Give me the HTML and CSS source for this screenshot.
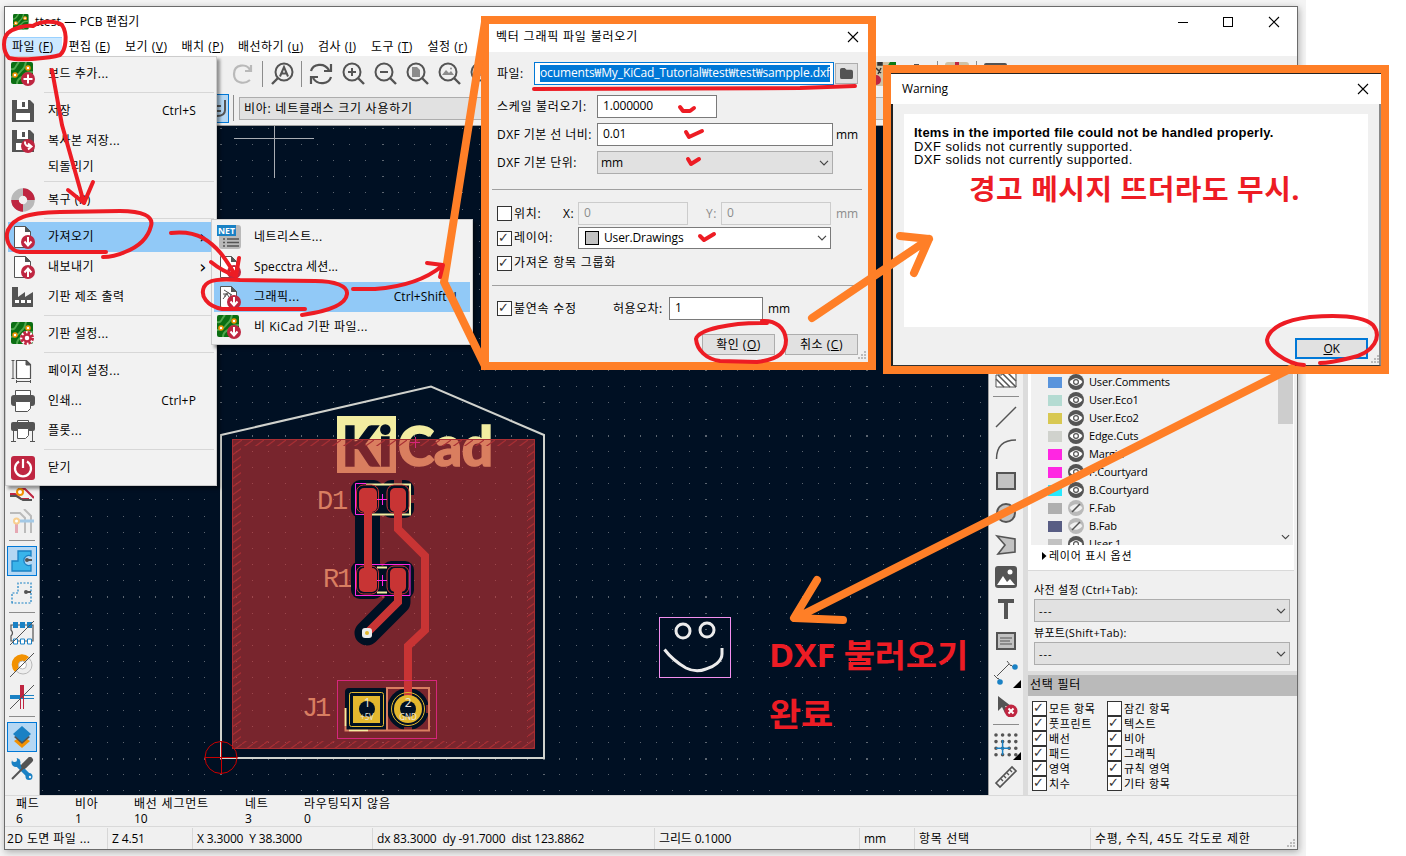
FILE: index.html
```html
<!DOCTYPE html>
<html lang="ko">
<head>
  <meta charset="UTF-8">
  <meta name="viewport" content="width=device-width, initial-scale=1.0">
  <title>test — PCB 편집기</title>
  <link rel="stylesheet" href="styles.css">
</head>
<body>
  <svg class="defs" width="0" height="0">
    <symbol id="pcb" viewBox="0 0 24 24">
      <rect width="22" height="22" rx="2" fill="#0b6e12"/>
      <path d="M0 7c5 1 4-3 8-7M0 15c8 0 8-5 12-8 2-2 2-4 3-7M6 22c0-6 5-6 7-9s5-3 9-3M14 22c1-4 4-5 8-6" stroke="#4fa64d" stroke-width="2" fill="none"/>
      <circle cx="4" cy="13" r="2" fill="#fff" stroke="#f29100" stroke-width="1.5"/>
      <circle cx="17" cy="6" r="2" fill="#fff" stroke="#f29100" stroke-width="1.5"/>
    </symbol>
    <symbol id="floppy" viewBox="0 0 24 24">
      <path d="M1 1h18l4 4v18H1z" fill="#545454"/><path d="M6 1h11v9H6z" fill="#fff"/><path d="M11 3h3v5h-3z" fill="#545454"/><path d="M5 14h14v7H5z" fill="#fff"/>
    </symbol>
    <symbol id="sheet" viewBox="0 0 24 24">
      <path d="M3.500 1.500h11l5 5v16h-16z" fill="#fff" stroke="#545454"/><path d="M14 1v6h6z" fill="#545454"/>
    </symbol>
    <symbol id="b-down" viewBox="0 0 24 24"><circle cx="17" cy="17" r="7" fill="#bf2641"/><path d="M17 12v8m-3.500-3.500l3.500 4 3.500-4" stroke="#fff" stroke-width="2" fill="none"/></symbol>
    <symbol id="b-up" viewBox="0 0 24 24"><circle cx="17" cy="17" r="7" fill="#bf2641"/><path d="M17 22v-8m-3.500 3.500l3.500-4 3.500 4" stroke="#fff" stroke-width="2" fill="none"/></symbol>
    <symbol id="b-plus" viewBox="0 0 24 24"><circle cx="17" cy="17" r="7" fill="#bf2641"/><path d="M17 12.500v9M12.500 17h9" stroke="#fff" stroke-width="2"/></symbol>
    <symbol id="b-arrow" viewBox="0 0 24 24"><circle cx="17" cy="17" r="7" fill="#bf2641"/><path d="M14 12.500c-.5 4 2 5 6 5m-3-3l3.500 3-3.500 3" stroke="#fff" stroke-width="2" fill="none"/></symbol>
    <symbol id="b-gear" viewBox="0 0 24 24"><circle cx="16" cy="16" r="7" fill="#fff"/><circle cx="16" cy="16" r="5.500" fill="none" stroke="#bf2641" stroke-width="3" stroke-dasharray="2.600 1.720"/><circle cx="16" cy="16" r="3.500" fill="#fff" stroke="#bf2641" stroke-width="2.500"/></symbol>
    <symbol id="lens" viewBox="0 0 24 24"><circle cx="11" cy="10" r="8.500" fill="none" stroke="#545454" stroke-width="2"/><path d="M17 16l6 6" stroke="#545454" stroke-width="2.400"/></symbol>
    <symbol id="eye" viewBox="0 0 16 16"><circle cx="8" cy="8" r="8" fill="#545454"/><path d="M1.500 8q6.500-7.500 13 0-6.500 7.500-13 0z" fill="#fff"/><circle cx="8" cy="8" r="2.400" fill="#fff" stroke="#545454" stroke-width="1.200"/></symbol>
    <symbol id="eye-off" viewBox="0 0 16 16"><circle cx="8" cy="8" r="8" fill="#b9b9b9"/><path d="M1.500 8q6.500-7.500 13 0-6.500 7.500-13 0z" fill="#f0f0f0"/><path d="M4 12l8-8" stroke="#545454" stroke-width="1.500"/></symbol>
    <symbol id="close" viewBox="0 0 12 12"><path d="M1 1l10 10M11 1L1 11" stroke="#000" stroke-width="1.100"/></symbol>
    <symbol id="chev" viewBox="0 0 10 6"><path d="M1 .8l4 4 4-4" fill="none" stroke="#444" stroke-width="1.200"/></symbol>
    <symbol id="grip" viewBox="0 0 9 9"><path d="M7 1h2M4 4h2M7 4h2M1 7h2M4 7h2M7 7h2" stroke="#bbb" stroke-width="2"/></symbol>
  </svg>

  <div class="desktop">
    <div class="window">
      <div class="titlebar">
        <svg class="app-icon"><use href="#pcb"/></svg>
        <span class="title">ttest — PCB 편집기</span>
        <svg class="win-buttons" viewBox="0 0 104 12"><path d="M1 6.500h10" stroke="#000"/><rect x="46.500" y="1.500" width="9" height="9" fill="none" stroke="#000"/><path d="M92 1l10 10M102 1L92 11" stroke="#000" stroke-width="1.100"/></svg>
      </div>
      <div class="menubar">
        <span class="active">파일 (<u>F</u>)</span>
        <span>편집 (<u>E</u>)</span>
        <span>보기 (<u>V</u>)</span>
        <span>배치 (<u>P</u>)</span>
        <span class="wide">배선하기 (<u>u</u>)</span>
        <span class="narrow">검사 (<u>I</u>)</span>
        <span>도구 (<u>T</u>)</span>
        <span>설정 (<u>r</u>)</span>
      </div>
      <div class="toolbar">
        <svg class="tool" viewBox="0 0 24 24"><path d="M20 3v6h-6M19 8C16 1 3 2 3 12c0 9 10 11 16 6" fill="none" stroke="#b9b9b9" stroke-width="2.200"/></svg>
        <i class="vsep"></i>
        <svg class="tool" viewBox="0 0 24 24"><circle cx="14" cy="10" r="8.500" fill="none" stroke="#545454" stroke-width="2"/><path d="M8 16l-6 6" stroke="#545454" stroke-width="2.400"/><path d="M10 14.500L14 5l4 9.500M11.500 11.500h5" fill="none" stroke="#545454" stroke-width="2"/></svg>
        <i class="vsep"></i>
        <svg class="tool" viewBox="0 0 24 24"><path d="M2 9C4 2 15 0 20 8M22 2v7h-7M22 15c-2 7-13 9-18 1M2 22v-7h7" fill="none" stroke="#545454" stroke-width="2.200"/></svg>
        <svg class="tool" viewBox="0 0 24 24"><use href="#lens"/><path d="M7 10h8M11 6v8" stroke="#545454" stroke-width="2"/></svg>
        <svg class="tool" viewBox="0 0 24 24"><use href="#lens"/><path d="M7 10h8" stroke="#545454" stroke-width="2"/></svg>
        <svg class="tool" viewBox="0 0 24 24"><use href="#lens"/><path d="M7 5h5l3 3v7H7z" fill="#8c8c8c"/></svg>
        <svg class="tool" viewBox="0 0 24 24"><use href="#lens"/><path d="M5 13l4-5 3 3 2-2 3 4z" fill="#8c8c8c"/><circle cx="14" cy="6.500" r="1" fill="#8c8c8c"/></svg>
        <svg class="tool" viewBox="0 0 24 24"><use href="#lens"/><path d="M7 6h8v8H7z" fill="#8c8c8c"/></svg>
        <span class="spring"></span>
        <svg class="tool board" viewBox="0 0 24 24"><rect width="24" height="24" rx="2" fill="#cfc2a6"/><path d="M12 24V10l6-10h6v24z" fill="#0b7a14"/><path d="M6 0h4v3H6zM4 6l5 5M9 6l-3 6" stroke="#333" fill="#333" stroke-width="1.500"/><circle cx="4" cy="18" r="5" fill="#bf2641"/></svg>
        <svg class="tool" viewBox="0 0 24 24"><path d="M8 2h5v2H8z" fill="#545454"/></svg>
        <i class="vsep"></i>
        <svg class="tool" viewBox="0 0 24 24"><rect width="24" height="24" rx="3" fill="#cfc2a6"/><path d="M10 0h4v8h-4z" fill="#bf2641"/></svg>
        <i class="vsep"></i>
        <svg class="tool" viewBox="0 0 24 24"><rect y="1" width="23" height="18" rx="2" fill="#545454"/></svg>
      </div>
      <div class="toolbar second">
        <span class="toggle"><svg viewBox="0 0 12 24"><path d="M1 10h4M1 15h4M9 4v10q0 6-8 6" fill="none" stroke="#545454" stroke-width="2"/></svg></span>
        <i class="vsep"></i>
        <span class="via-select">비아: 네트클래스 크기 사용하기</span>
      </div>

      <div class="workspace">
        <div class="side left">
          <svg viewBox="0 0 24 24"><path d="M0 17h5l6 5h8M8 12h7l9 9" fill="none" stroke="#bf2641" stroke-width="2"/><path d="M0 19l6 0 7 4h9" fill="none" stroke="#545454" stroke-width="2"/><circle cx="10" cy="15" r="3" fill="#fff" stroke="#f29100" stroke-width="2"/></svg>
          <svg viewBox="0 0 24 24"><path d="M0 4h10l5 5v15M14 0l7 7v17" fill="none" stroke="#bbb" stroke-width="2"/><path d="M6.500 12v12" stroke="#e6a8b3" stroke-width="3"/><path d="M8 12h16" stroke="#a3c9e6" stroke-width="3"/><circle cx="6.500" cy="12" r="2.500" fill="#fff" stroke="#f9cf8f" stroke-width="2"/></svg>
          <i></i>
          <svg class="on" viewBox="0 0 24 24"><path d="M2 22V12h6V2h13v5a5 5 0 1 0 0 9v6z" fill="#39b4ea" stroke="#1a81c4" stroke-width="1.300"/><circle cx="17" cy="11" r="2" fill="#545454"/><path d="M17 11h5" stroke="#545454" stroke-width="2"/></svg>
          <svg viewBox="0 0 24 24"><path d="M2 22V12h6V2h13v20z" fill="none" stroke="#1a81c4" stroke-width="1.200" stroke-dasharray="2 1.500"/><circle cx="16" cy="11" r="2" fill="#545454"/><path d="M16 11h5" stroke="#545454" stroke-width="2"/></svg>
          <i></i>
          <svg viewBox="0 0 24 24"><path d="M1 4h22v16H1v-5q3-3 0-6z" fill="none" stroke="#545454" stroke-width="1.200"/><path d="M3 1h5v6H3zM10 1h5v6h-5zM17 1h5v6h-5z" fill="#1a81c4"/><path d="M3.500 18h4v5h-4zM10.500 18h4v5h-4zM17.500 18h4v5h-4z" fill="#fff" stroke="#1a81c4"/><path d="M0 24L24 0" stroke="#545454"/></svg>
          <svg viewBox="0 0 24 24"><circle cx="13" cy="12" r="9" fill="#eee" stroke="#b9b9b9"/><path d="M5 19A10 10 0 0 1 19 4l-5 5a4 4 0 0 0-5 5z" fill="#f29100"/><circle cx="12.500" cy="12" r="4" fill="#fff" stroke="#b9b9b9"/><path d="M0 24L24 0" stroke="#545454"/></svg>
          <svg viewBox="0 0 24 24"><path d="M0 12h12" stroke="#1a81c4" stroke-width="4"/><path d="M12 10.500h12M12 13.500h12" stroke="#1a81c4"/><path d="M12 0v13" stroke="#bf2641" stroke-width="4"/><path d="M10.500 13v11M13.500 13v11" stroke="#bf2641"/><path d="M0 24L24 0" stroke="#545454"/></svg>
          <i></i>
          <svg class="on" viewBox="0 0 24 24"><path d="M12 23l-8-7 8-5 8 5z" fill="#f29100"/><path d="M12 19l-8-7 8-5 8 5z" fill="#545454"/><path d="M12 17L3 9l9-8 9 8z" fill="#1a81c4"/></svg>
          <svg viewBox="0 0 24 24"><path d="M5 5l14 14" stroke="#1a81c4" stroke-width="4.500"/><circle cx="6" cy="5.500" r="4.500" fill="#1a81c4"/><circle cx="4.500" cy="2.500" r="2.500" fill="#f0f0f0"/><circle cx="19" cy="19.500" r="3.500" fill="#1a81c4"/><circle cx="20" cy="20" r="1.200" fill="#f0f0f0"/><path d="M2 22L15 9" stroke="#545454" stroke-width="2"/><path d="M14 9l6-6" stroke="#545454" stroke-width="6" stroke-linecap="round"/></svg>
        </div>

        <!-- board canvas, user units are window pixels -->
        <svg class="canvas" viewBox="40 126 948 669">
          <defs>
            <pattern id="hatch" width="11" height="8" patternUnits="userSpaceOnUse"><path d="M0 8L11 0" stroke="#a82e33" stroke-width="1.200"/></pattern>
          </defs>
          <g id="grid" fill="#5c6570" shape-rendering="crispEdges"></g>
          <path d="M234 138.500h80M274.500 126v52" stroke="#a9adb3"/>
          <path d="M221 435L431 386.500 544 435V758H221z" fill="none" stroke="#d0d2cd" stroke-width="2"/>
          <g class="logo" font-size="56">
            <rect x="337" y="416" width="59" height="57" fill="#f2eda1"/>
            <text x="342" y="465.500" fill="#001023" stroke="#001023" textLength="50" lengthAdjust="spacingAndGlyphs">Ki</text>
            <text x="398" y="465.500" fill="#f2eda1" stroke="#f2eda1" textLength="95" lengthAdjust="spacingAndGlyphs">Cad</text>
          </g>
          <path d="M232 439h303v310H232z" fill="#c83434" fill-opacity=".6"/>
          <path d="M232 439h303v310H232zM241 446v295h286V446z" fill="url(#hatch)" fill-rule="evenodd"/>
          <path d="M232.500 439.500h302v309h-302z" fill="none" stroke="#a82e33"/>
          <g class="stroke-font" fill="#d97e61" font-size="27">
            <text x="317" y="509" textLength="31">D1</text>
            <text x="323" y="587" textLength="30">R1</text>
            <text x="302" y="716" textLength="29">J1</text>
          </g>
          <path d="M355 500h25v80h-25z" fill="#001023"/>
          <rect x="351" y="480" width="32" height="38" rx="9" fill="#001023"/>
          <rect x="382" y="480" width="32" height="38" rx="9" fill="#001023"/>
          <rect x="351" y="561" width="32" height="38" rx="9" fill="#001023"/>
          <rect x="382" y="561" width="32" height="38" rx="9" fill="#001023"/>
          <path d="M375 485h10v29h-10zM375 566h10v29h-10z" fill="#001023"/>
          <path d="M398 580v22L367 633" fill="none" stroke="#001023" stroke-width="25" stroke-linecap="round" stroke-linejoin="round"/>
          <path d="M406 495h8v8h-8zM394 516h8v3h-8zM394 479h8v6h-8z" fill="#78262d"/>
          <path d="M366 484.500h44v30h-44" fill="none" stroke="#f2eda1" stroke-width="2"/>
          <path d="M377 567.500h10M377 592.500h10" stroke="#f2eda1" stroke-width="2"/>
          <g fill="#001023" stroke="#c83434">
            <rect x="356.500" y="485" width="22" height="28" rx="7"/>
            <rect x="387" y="485" width="22" height="28" rx="7"/>
            <rect x="356.500" y="566" width="22" height="28" rx="7"/>
            <rect x="387" y="566" width="22" height="28" rx="7"/>
          </g>
          <path d="M366 483.500h-10.500v31h10.500M355.500 564.500h54.500v31h-54.500z" fill="none" stroke="#ff26e2"/>
          <g fill="#c83434">
            <rect x="359" y="488" width="18" height="24" rx="5"/>
            <rect x="390" y="488" width="16" height="24" rx="5"/>
            <rect x="359" y="568" width="18" height="24" rx="5"/>
            <rect x="390" y="568" width="16" height="24" rx="5"/>
          </g>
          <rect x="345" y="688" width="43" height="43" rx="4" fill="#001023"/>
          <circle cx="408" cy="709" r="21" fill="#001023"/>
          <path d="M404 727h8v4h-8zM426 705h4v8h-4z" fill="#78262d"/>
          <path d="M345.500 708v22.500H386" fill="none" stroke="#d97e61" stroke-width="2"/>
          <path d="M345.500 708v18M349 730.500h19M387 692v36" stroke="#f2eda1" stroke-width="1.500"/>
          <path d="M387 688h42v42.500h-42z" fill="none" stroke="#d97e61" stroke-width="2"/>
          <g fill="none" stroke="#c83434" stroke-width="8">
            <path d="M368 499v82M398 499v30l27 27v74l-17 16v50M398 580v22L367 633"/>
          </g>
          <rect x="349.500" y="692.500" width="34" height="34" rx="2" fill="none" stroke="#e3b72e"/>
          <rect x="353" y="696" width="27" height="27" fill="#e3b72e"/>
          <circle cx="408" cy="709" r="16.500" fill="none" stroke="#e3b72e"/>
          <circle cx="408" cy="709" r="14" fill="#e3b72e"/>
          <circle cx="367" cy="709" r="8" fill="#001023"/>
          <circle cx="408" cy="709" r="8" fill="#001023"/>
          <g class="pad-text" fill="#e8e4d8" text-anchor="middle">
            <text x="367" y="707" font-size="12">1</text>
            <text x="408" y="707" font-size="12">2</text>
            <text x="367" y="720" font-size="8">+5V</text>
            <text x="408" y="720" font-size="8">GND</text>
          </g>
          <rect x="337.500" y="680.500" width="99" height="58" fill="none" stroke="#d6267c"/>
          <rect x="362" y="628" width="10" height="10" rx="3" fill="#ececec"/><circle cx="367" cy="633" r="2" fill="#e3b72e"/>
          <path d="M377 499.500h10M382.500 494v11M377 580.500h10M382.500 575v11" stroke="#ff26e2"/>
          <path d="M410 442.500h10M415.500 437v11" stroke="#d6267c"/>
          <path d="M204.500 757.500h33M221.500 741v33" stroke="#c80000"/><circle cx="221" cy="757.500" r="16" fill="none" stroke="#c80000"/>
          <g fill="none" stroke="#ececec" stroke-width="3">
            <rect x="659.500" y="617.500" width="71" height="60" stroke="#f48ff0" stroke-width="1"/>
            <circle cx="683" cy="631" r="7"/><circle cx="707" cy="630" r="7"/>
            <path d="M664.500 649.500C671 658 679 664 686 668q10 5 20 1c8-2 16-8 16-15v-6"/>
          </g>
          <g class="note">
            <text x="769" y="667" textLength="199" lengthAdjust="spacingAndGlyphs">DXF 불러오기</text>
            <text x="769" y="726" textLength="64" lengthAdjust="spacingAndGlyphs">완료</text>
          </g>
        </svg>

        <div class="side right">
          <svg viewBox="0 0 24 24"><path d="M2 22V10h6V4h14v18z" fill="#fff" stroke="#545454"/><path d="M2 14l8 8M4 10l12 12M8 8l14 14M12 6l10 10M18 5l4 4" stroke="#545454" stroke-width="1.500"/></svg>
          <i></i>
          <svg viewBox="0 0 24 24"><path d="M2 22L22 2" stroke="#545454" stroke-width="1.500"/></svg>
          <svg viewBox="0 0 24 24"><path d="M2.500 22Q2.500 3 22 3" fill="none" stroke="#545454" stroke-width="1.500"/></svg>
          <svg viewBox="0 0 24 24"><path d="M3 4h18v16H3z" fill="#c2c2c2" stroke="#545454" stroke-width="2"/></svg>
          <svg viewBox="0 0 24 24"><circle cx="12" cy="12" r="9" fill="#c2c2c2" stroke="#545454" stroke-width="2"/></svg>
          <svg viewBox="0 0 24 24"><path d="M3 3l18 3v13L4 21l7-9z" fill="#c2c2c2" stroke="#545454" stroke-width="1.600"/></svg>
          <svg viewBox="0 0 24 24"><rect x="1" y="1" width="22" height="22" rx="3" fill="#545454"/><path d="M3 20l6-9 4 6 3-3 5 6z" fill="#fff"/><circle cx="16" cy="7" r="2.500" fill="#fff"/></svg>
          <svg viewBox="0 0 24 24"><path d="M4 4h16M12 3v19" stroke="#545454" stroke-width="4"/></svg>
          <svg viewBox="0 0 24 24"><path d="M3 4h18v16H3z" fill="#c2c2c2" stroke="#545454" stroke-width="2"/><path d="M6 9h12M6 12h10M6 15h12" stroke="#545454" stroke-width="1.200"/></svg>
          <svg class="more" viewBox="0 0 30 30"><path d="M6 18L18 6M3 17l4 4M16 3l4 5M7 20l3 4M20 7l4 4" fill="none" stroke="#545454"/><circle cx="24" cy="9" r="2.800" fill="#1a81c4"/><circle cx="9" cy="24" r="2.800" fill="#1a81c4"/><path d="M30 22v8h-8z"/></svg>
          <svg viewBox="0 0 24 24"><path d="M4 3v15l4-4 3 6 3-2-3-5h6z" fill="#545454"/><circle cx="17" cy="18" r="6.500" fill="#bf2641"/><path d="M14.500 15.500l5 5m0-5l-5 5" stroke="#fff" stroke-width="2"/></svg>
          <i></i>
          <svg class="more" viewBox="0 0 30 30"><path d="M5 5h22M5 11.600h22M5 18.200h22M5 24.800h22" stroke="#545454" stroke-width="3.600" stroke-dasharray="0 6.600" stroke-linecap="round"/><path d="M11.600 10v15M5 18.200h14" stroke="#1a81c4" stroke-width="1.500"/><path d="M30 22v8h-8z"/></svg>
          <svg viewBox="0 0 24 24"><path d="M2 18L18 2l4 4L6 22z" fill="none" stroke="#545454" stroke-width="1.700"/><path d="M7 14l2 2M10 11l2 2M13 8l2 2M16 5l2 2" stroke="#545454" stroke-width="1.400"/></svg>
        </div>

        <div class="panel">
          <div class="layers">
            <div class="rows">
              <div class="layer"><b class="c-comments"></b><svg><use href="#eye"/></svg>User.Comments</div>
              <div class="layer"><b class="c-eco1"></b><svg><use href="#eye"/></svg>User.Eco1</div>
              <div class="layer"><b class="c-eco2"></b><svg><use href="#eye"/></svg>User.Eco2</div>
              <div class="layer"><b class="c-edge"></b><svg><use href="#eye"/></svg>Edge.Cuts</div>
              <div class="layer"><b class="c-margin"></b><svg><use href="#eye"/></svg>Margin</div>
              <div class="layer"><b class="c-margin"></b><svg><use href="#eye"/></svg>F.Courtyard</div>
              <div class="layer"><b class="c-bcrtyd"></b><svg><use href="#eye"/></svg>B.Courtyard</div>
              <div class="layer"><b class="c-ffab"></b><svg><use href="#eye-off"/></svg>F.Fab</div>
              <div class="layer"><b class="c-bfab"></b><svg><use href="#eye-off"/></svg>B.Fab</div>
              <div class="layer"><b class="c-user"></b><svg><use href="#eye"/></svg>User.1</div>
            </div>
            <div class="scroll"><svg viewBox="0 0 10 6"><use href="#chev"/></svg></div>
          </div>
          <div class="layer-options"><svg viewBox="0 0 5 8"><path d="M0 0l4.500 4L0 8z"/></svg>레이어 표시 옵션</div>
          <div class="presets">
            <label>사전 설정 (Ctrl+Tab):</label>
            <div class="combo">---<svg><use href="#chev"/></svg></div>
            <label>뷰포트(Shift+Tab):</label>
            <div class="combo">---<svg><use href="#chev"/></svg></div>
          </div>
          <div class="filter-title">선택 필터</div>
          <div class="filter">
            <span class="check on">모든 항목</span><span class="check">잠긴 항목</span>
            <span class="check on">풋프린트</span><span class="check on">텍스트</span>
            <span class="check on">배선</span><span class="check on">비아</span>
            <span class="check on">패드</span><span class="check on">그래픽</span>
            <span class="check on">영역</span><span class="check on">규칙 영역</span>
            <span class="check on">치수</span><span class="check on">기타 항목</span>
          </div>
        </div>
      </div>

      <div class="info">
        <div>패드<br>6</div>
        <div>비아<br>1</div>
        <div>배선 세그먼트<br><span class="num">10</span></div>
        <div>네트<br>3</div>
        <div>라우팅되지 않음<br>0</div>
      </div>
      <div class="status">
        <span>2D 도면 파일 ...</span>
        <span>Z 4.51</span>
        <span>X 3.3000 &nbsp;Y 38.3000</span>
        <span>dx 83.3000 &nbsp;dy -91.7000 &nbsp;dist 123.8862</span>
        <span>그리드 0.1000</span>
        <span>mm</span>
        <span class="ko">항목 선택</span>
        <span class="ko">수평, 수직, 45도 각도로 제한<svg><use href="#grip"/></svg></span>
      </div>
    </div>

    <div class="menu file-menu">
      <div class="item"><svg><use href="#pcb"/><use href="#b-plus"/></svg>보드 추가...</div>
      <hr>
      <div class="item"><svg><use href="#floppy"/></svg>저장<kbd>Ctrl+S</kbd></div>
      <div class="item"><svg><use href="#floppy"/><use href="#b-arrow"/></svg>복사본 저장...</div>
      <div class="item short"><svg></svg>되돌리기</div>
      <hr>
      <div class="item"><svg viewBox="0 0 24 24"><circle cx="12" cy="12" r="8" fill="none" stroke="#b9b9b9" stroke-width="7.500"/><path d="M12 4a8 8 0 0 1 8 8M12 20a8 8 0 0 1-8-8" fill="none" stroke="#bf2641" stroke-width="7.500"/></svg>복구 (R)</div>
      <hr>
      <div class="item selected"><svg><use href="#sheet"/><use href="#b-down"/></svg>가져오기<em>›</em></div>
      <div class="item"><svg><use href="#sheet"/><use href="#b-up"/></svg>내보내기<em>›</em></div>
      <div class="item"><svg viewBox="0 0 24 24"><path d="M1 22V2h6v10l7-5v5l8-5v15z" fill="#545454"/><path d="M4 15h4v3H4zM10 15h4v3h-4zM16 15h4v3h-4z" fill="#fff"/></svg>기판 제조 출력</div>
      <hr>
      <div class="item"><svg><use href="#pcb"/><use href="#b-gear"/></svg>기판 설정...</div>
      <hr>
      <div class="item"><svg viewBox="0 0 24 24"><path d="M5.500 1.500h10l4 4v14h-14z" fill="#fff" stroke="#545454" stroke-width="1.200"/><path d="M15 1v5h5zM2 1v19M.500 1.500h3M.500 19.500h3M5 22.500h15M5.500 21v3M19.500 21v3" fill="#545454" stroke="#545454"/></svg>페이지 설정...</div>
      <div class="item"><svg viewBox="0 0 24 24"><path d="M4.500 1.500h15v5h-15z" fill="#fff" stroke="#545454"/><rect y="6" width="24" height="11" rx="3" fill="#545454"/><path d="M4.500 12.500h15v7l-3 3h-12z" fill="#fff" stroke="#545454"/></svg>인쇄...<kbd>Ctrl+P</kbd></div>
      <div class="item"><svg viewBox="0 0 24 24"><path d="M6.500 1.500h11v4h-11z" fill="#fff" stroke="#545454"/><rect y="3" width="24" height="9" rx="2" fill="#545454"/><path d="M2.500 11v12M21.500 11v12M0 22.500h5M19 22.500h5" stroke="#545454"/><path d="M6.500 9.500h11v7l-3 3h-8z" fill="#fff" stroke="#545454"/></svg>플롯...</div>
      <hr>
      <div class="item"><svg viewBox="0 0 24 24"><rect width="24" height="24" rx="3" fill="#bf2641"/><path d="M8 5.500a8 8 0 1 0 8 0M12 3v9" fill="none" stroke="#fff" stroke-width="2.200"/></svg>닫기</div>
    </div>

    <div class="menu sub-menu">
      <div class="item"><svg viewBox="0 0 24 24"><rect x="2" y="0" width="22" height="24" rx="3" fill="#b9b9b9"/><rect width="19" height="11" fill="#1a81c4"/><text x="1" y="9" class="net" textLength="17" lengthAdjust="spacingAndGlyphs">NET</text><path d="M6 14h2M10 14h12M6 17.500h2M10 17.500h12M6 21h2M10 21h12" stroke="#545454" stroke-width="1.600"/></svg>네트리스트...</div>
      <div class="item latin"><svg><use href="#sheet"/><use href="#b-down"/></svg>Specctra 세션...</div>
      <div class="item selected"><svg viewBox="0 0 24 24"><use href="#sheet"/><path d="M7 5l8 5M6 9h5M8 12a3 3 0 1 1 5 1M6 14l4-5 4 6" fill="none" stroke="#545454"/><use href="#b-down"/></svg>그래픽...<kbd>Ctrl+Shift+I</kbd></div>
      <div class="item"><svg><use href="#pcb"/><use href="#b-down"/></svg>비 KiCad 기판 파일...</div>
    </div>

    <div class="dialog import">
      <div class="dialog-title">벡터 그래픽 파일 불러오기<svg><use href="#close"/></svg></div>
      <div class="dialog-body">
        <div class="field file"><label>파일:</label><div class="input focus"><mark>ocuments₩My_KiCad_Tutorial₩test₩test₩sampple.dxf</mark></div><div class="browse"><svg viewBox="0 0 16 14"><path d="M1 3q0-2 2-2h3l2 2h5q2 0 2 2v6q0 2-2 2H3q-2 0-2-2z" fill="#545454"/></svg></div></div>
        <div class="field scale"><label>스케일 불러오기:</label><div class="input">1.000000</div></div>
        <div class="field"><label>DXF 기본 선 너비:</label><div class="input">0.01</div><span>mm</span></div>
        <div class="field"><label>DXF 기본 단위:</label><div class="combo">mm<svg><use href="#chev"/></svg></div></div>
        <hr>
        <div class="field place"><span class="check">위치:</span><label>X:</label><div class="input off">0</div><label class="off y">Y:</label><div class="input off">0</div><span class="off">mm</span></div>
        <div class="field layer-pick"><span class="check on">레이어:</span><div class="combo white"><b></b>User.Drawings<svg><use href="#chev"/></svg></div></div>
        <div class="field group"><span class="check on">가져온 항목 그룹화</span></div>
        <hr>
        <div class="field fix"><span class="check on">불연속 수정</span><label>허용오차:</label><div class="input">1</div><span>mm</span></div>
        <div class="buttons"><div class="button">확인 (<u>O</u>)</div><div class="button">취소 (<u>C</u>)</div></div>
      </div>
      <svg class="corner"><use href="#grip"/></svg>
    </div>

    <div class="dialog warning">
      <div class="dialog-title">Warning<svg><use href="#close"/></svg></div>
      <div class="dialog-body">
        <div class="report">
          <strong>Items in the imported file could not be handled properly.</strong>
          <p>DXF solids not currently supported.</p>
          <p>DXF solids not currently supported.</p>
          <svg class="note" viewBox="0 0 334 40"><text x="0" y="30" textLength="331" lengthAdjust="spacingAndGlyphs">경고 메시지 뜨더라도 무시.</text></svg>
        </div>
        <div class="buttons"><div class="button default"><u>O</u>K</div></div>
      </div>
      <svg class="corner"><use href="#grip"/></svg>
    </div>

    <!-- hand drawn marks over the windows -->
    <svg class="marks" viewBox="0 0 1406 856">
      <g class="orange">
        <path d="M485 22L444 282 485 366"/>
        <path class="arrow" d="M812 318L929 239M900 236L929 239 914 273"/>
        <path class="arrow" d="M1292 368L796 618M817 580L794 618 843 620"/>
      </g>
      <g class="red">
        <path d="M33 26C40 21 55 20 62 25C68 34 66 50 60 55C50 58 20 61 9 58C2 50 3 38 8 33C14 28 25 25 33 26"/>
        <path d="M52 70L62 125 84 203M68 190L84 203 93 182"/>
        <path d="M106 252H20C8 250 5 238 8 230C14 218 25 213 60 212L120 211C142 211 154 216 151 226C148 238 138 247 125 252Q114 257 103 257"/>
        <path d="M171 233Q190 231 203 238C220 248 227 262 236 276M211 262Q222 271 236 276L239 258"/>
        <path d="M305 309H222C207 306 200 296 204 287C208 279 220 279 240 280L315 281C335 281 348 286 347 294C346 304 330 311 302 315"/>
        <path d="M353 289H375C402 287 425 280 442 266M427 263L443 265 440 277"/>
        <path d="M534 89L800 88 855 86"/>
        <path d="M680 107l3 4h7l4-3M686 132l3 5 13-6M688 159l3 5 8-5M700 236l4 4 10-6"/>
        <path d="M767 323C730 322 698 330 696 339C697 350 706 359 720 361L757 362C780 359 786 352 786 340C785 328 776 320 762 321"/>
        <path d="M1304 365C1285 364 1267 348 1267 340C1269 328 1285 320 1310 317C1335 315 1362 315 1373 325C1382 336 1375 353 1350 358Q1330 363 1320 363"/>
      </g>
    </svg>
  </div>

  <script>
    // grid dots, every tenth one is larger
    const grid = document.getElementById('grid');
    const step = 16.16;
    let dots = '';
    for (let i = -11; i < 48; i++) {
      for (let j = -39; j < 3; j++) {
        const x = Math.round(221 + i * step) - 1;
        const y = Math.round(758 + j * step);
        dots += `<rect x="${x}" y="${y}" width="${i % 10 ? 1 : 2}" height="${j % 10 ? 1 : 2}"/>`;
      }
    }
    grid.innerHTML = dots;
  </script>
</body>
</html>
```
FILE: styles.css
```css
* {
  margin: 0;
  padding: 0;
  box-sizing: border-box;
}

body {
  background-color: #fff;
  font-family: "Open Sans", "Noto Sans CJK KR", sans-serif;
  font-size: 12px;
  line-height: 16px;
  color: #000;
  overflow: hidden;
  letter-spacing: -0.15px;
}

svg {
  flex: none;
}

.defs {
  position: absolute;
}

.desktop {
  position: relative;
  width: 1406px;
  height: 856px;
  background: linear-gradient(#f4f4f4, #f4f4f4) no-repeat 0 0 / 1306px 856px #fff;
}

/* Main window */
.window {
  position: absolute;
  left: 4px;
  top: 6px;
  width: 1294px;
  height: 844px;
  border: 1px solid #6b6b6b;
  background-color: #f0f0f0;
  box-shadow: 1px 2px 7px rgba(0, 0, 0, 0.3);
  display: flex;
  flex-direction: column;
}

.titlebar {
  height: 30px;
  background-color: #fff;
  display: flex;
  align-items: center;
  padding: 0 16px 0 8px;
}

.app-icon {
  width: 17px;
  height: 17px;
  margin-right: 5px;
}

.title {
  flex: 1;
  letter-spacing: 0.15px;
}

.win-buttons {
  width: 104px;
  height: 12px;
}

.menubar {
  height: 19px;
  background-color: #fff;
  display: flex;
  letter-spacing: 0.5px;
}

.menubar span {
  width: 56.500px;
  padding-left: 7px;
  line-height: 19px;
  white-space: nowrap;
  flex: none;
}

.menubar .wide {
  width: 80px;
}

.menubar .narrow {
  width: 53px;
}

.menubar .active {
  background-color: #cce8ff;
  border-top: 1px solid #99d1ff;
  line-height: 17px;
}

.toolbar {
  height: 37px;
  padding: 0 285px 1px 222px;
  display: flex;
  align-items: center;
}

.tool {
  width: 24px;
  height: 24px;
  margin: 0 4px;
}

.tool.board {
  margin-right: 6px;
}

.vsep {
  width: 1px;
  height: 26px;
  margin: 0 3px;
  background-color: #8c8c8c;
}

.spring {
  flex: 1;
}

.toolbar.second {
  height: 33px;
  padding: 0 285px 2px 195px;
  border-bottom: 1px solid #a0a0a0;
}

.toggle {
  width: 29px;
  height: 29px;
  border: 1px solid #0078d7;
  background-color: #b5d7f3;
  display: flex;
  justify-content: flex-end;
  align-items: center;
}

.toggle svg {
  width: 12px;
  height: 24px;
}

.second .vsep {
  margin: 0 5px 0 4px;
}

.via-select {
  flex: 1;
  height: 23px;
  padding-left: 4px;
  line-height: 21px;
  border: 1px solid #adadad;
  background-color: #e1e1e1;
  letter-spacing: 0.75px;
}

.workspace {
  height: 669px;
  display: flex;
}

.side {
  width: 35px;
  display: flex;
  flex-direction: column;
  justify-content: flex-end;
  align-items: center;
}

.side svg {
  width: 30px;
  height: 30px;
  margin: 1px 0;
  padding: 3px;
}

.side .on {
  background-color: #b5d7f3;
  border: 1px solid #0078d7;
  padding: 2px;
}

.side .more {
  padding: 0;
}

.side i {
  width: 26px;
  height: 1px;
  margin: 3px 0 4px;
  background-color: #8c8c8c;
}

.left {
  padding-bottom: 10px;
  border-right: 1px solid #a0a0a0;
}

.right {
  width: 40px;
  padding-bottom: 2px;
  border-right: 5px solid #dcdcdc;
  border-left: 1px solid #a0a0a0;
}

.canvas {
  width: 948px;
  height: 669px;
  background-color: #001023;
}

.logo {
  font-family: Lato, sans-serif;
  font-weight: 900;
  stroke-width: 1.500px;
}

.stroke-font {
  font-family: "Liberation Mono", monospace;
}

.pad-text {
  font-family: "Noto Sans", sans-serif;
}

.note text {
  font: bold 32px "Open Sans", "Noto Sans CJK KR", sans-serif;
  fill: #ed1c24;
}

/* Appearance panel */
.panel {
  flex: 1;
  display: flex;
  flex-direction: column;
}

.layers {
  height: 419px;
  margin-right: 3px;
  padding: 247px 1px 0 3px;
  background-color: #fff;
  display: flex;
  overflow: hidden;
  font-size: 11px;
}

.rows {
  flex: 1;
  background-color: #f0f0f0;
  overflow: hidden;
}

.layer {
  height: 18px;
  padding-left: 17px;
  display: flex;
  align-items: center;
}

.layer b {
  width: 14px;
  height: 11px;
  margin-right: 6px;
}

.layer svg {
  width: 16px;
  height: 16px;
  margin-right: 5px;
}

.c-comments { background-color: #5994dc; }
.c-eco1 { background-color: #b4dbd2; }
.c-eco2 { background-color: #d8c852; }
.c-edge { background-color: #d0d2cd; }
.c-margin { background-color: #ff26e2; }
.c-bcrtyd { background-color: #26e9ff; }
.c-ffab { background-color: #afafaf; }
.c-bfab { background-color: #585d84; }
.c-user { background-color: #c2c2c2; }

.scroll {
  width: 15px;
  background: linear-gradient(#cdcdcd, #cdcdcd) no-repeat 0 0 / 15px 51px #f0f0f0;
  display: flex;
  align-items: flex-end;
  justify-content: center;
  padding-bottom: 5px;
}

.scroll svg {
  width: 9px;
  height: 6px;
}

.layer-options {
  height: 26px;
  margin-right: 3px;
  padding-left: 14px;
  background-color: #fff;
  border-bottom: 1px solid #d9d9d9;
  font-size: 11px;
  line-height: 22px;
  letter-spacing: 0.75px;
}

.layer-options svg {
  width: 5px;
  height: 8px;
  margin-right: 2px;
}

.presets {
  height: 104px;
  padding: 9px 7px 0 6px;
  border-bottom: 4px solid #dcdcdc;
  font-size: 11px;
  letter-spacing: 0.3px;
}

.presets label {
  display: block;
  height: 19px;
  line-height: 19px;
}

.combo {
  height: 23px;
  padding: 0 3px 0 3px;
  border: 1px solid #adadad;
  background-color: #e1e1e1;
  display: flex;
  align-items: center;
}

.presets .combo {
  margin-bottom: 1px;
  padding-left: 4px;
  letter-spacing: 1px;
}

.combo svg {
  width: 10px;
  height: 6px;
  margin-left: auto;
}

.filter-title {
  height: 21px;
  padding-left: 2px;
  line-height: 20px;
  background-color: #bababa;
  letter-spacing: 0.75px;
}

.filter {
  padding: 5px 0 0 4px;
  display: grid;
  grid-template-columns: 75px 1fr;
  grid-auto-rows: 15px;
  font-size: 11px;
  letter-spacing: 0.65px;
}

.check {
  display: flex;
  align-items: center;
  white-space: nowrap;
}

.check::before {
  content: "";
  width: 13px;
  height: 13px;
  line-height: 12px;
  margin-right: 3px;
  border: 1px solid #333;
  background-color: #fff;
  flex: none;
}

.check.on::before {
  content: "✓";
  font-family: "DejaVu Sans", sans-serif;
  font-size: 13px;
  letter-spacing: 0;
  color: #333;
}

.info {
  height: 31px;
  border-top: 1px solid #d9d9d9;
  display: grid;
  grid-template-columns: 59px 59px 111px 59px 1fr;
  padding-left: 11px;
  line-height: 15px;
  letter-spacing: 0.8px;
}

.num {
  letter-spacing: 0;
}

.status {
  flex: 1;
  border-top: 1px solid #d9d9d9;
  display: grid;
  grid-template-columns: 103px 85px 180px 282px 205px 55px 176px 1fr;
  line-height: 21px;
  padding-top: 1px;
}

.status span {
  padding-left: 4px;
  white-space: nowrap;
  border-right: 1px solid #d7d7d7;
}

.status span:first-child {
  padding-left: 2px;
  letter-spacing: 0.4px;
}

.status .ko {
  letter-spacing: 0.7px;
}

.status span:last-child {
  display: flex;
  border: 0;
}

.status svg {
  width: 9px;
  height: 9px;
  margin: 11px 2px 0 auto;
}

/* Popup menus */
.menu {
  position: absolute;
  padding: 2px;
  border: 1px solid #ccc;
  background-color: #f2f2f2;
  box-shadow: 3px 3px 3px rgba(0, 0, 0, 0.4);
  letter-spacing: 0.5px;
}

.file-menu {
  left: 5px;
  top: 56px;
  width: 212px;
  height: 430px;
}

.sub-menu {
  left: 211px;
  top: 219px;
  width: 262px;
  height: 126px;
}

.item {
  height: 30px;
  display: flex;
  align-items: center;
  padding-left: 3px;
}

.item.latin {
  letter-spacing: 0.1px;
}

.short {
  height: 22px;
}

.item > svg {
  width: 24px;
  height: 24px;
  margin-right: 13px;
}

.selected {
  background-color: #91c9f7;
}

.menu hr {
  height: 1px;
  margin: 3px 0 3px 36px;
  border: 0;
  background-color: #d7d7d7;
}

.item kbd {
  margin-left: auto;
  margin-right: 18px;
  font: inherit;
  letter-spacing: 0.15px;
}

.sub-menu kbd {
  margin-right: 13px;
  letter-spacing: 0.1px;
}

.item em {
  margin-left: auto;
  margin-right: 7px;
  font: 18px/20px "DejaVu Sans", sans-serif;
}

.net {
  font: bold 9px "Open Sans", sans-serif;
  letter-spacing: 0;
  fill: #fff;
}

/* Dialogs */
.dialog {
  position: absolute;
  border: 8px solid #ff7f27;
  background-color: #f0f0f0;
}

.import {
  left: 481px;
  top: 16px;
  width: 395px;
  height: 354px;
}

.dialog-title {
  height: 28px;
  padding: 0 9px 3px 7px;
  background-color: #fff;
  display: flex;
  align-items: center;
}

.import .dialog-title {
  letter-spacing: 0.8px;
}

.dialog-title svg {
  width: 12px;
  height: 12px;
  margin-left: auto;
}

.import .dialog-body {
  padding: 10px 10px 0 8px;
}

.field {
  height: 23px;
  margin-bottom: 5px;
  display: flex;
  align-items: center;
}

.field label {
  width: 100px;
  white-space: nowrap;
  letter-spacing: 0.45px;
  flex: none;
}

.input {
  width: 236px;
  height: 23px;
  padding-left: 5px;
  line-height: 20px;
  border: 1px solid #7a7a7a;
  background-color: #fff;
}

.field .combo {
  width: 236px;
}

.field > span {
  padding-left: 3px;
}

.field > .check {
  padding: 0;
  letter-spacing: 0.75px;
}

.field .check::before {
  margin-right: 2px;
}

.filter .check::before {
  margin-right: 2px;
}

.field.file {
  margin-bottom: 10px;
}

.file label {
  width: 37px;
}

.scale label {
  letter-spacing: 0.7px;
}

.file .input {
  width: 300px;
  border: 1px solid #0078d7;
  padding: 2px 3px 0 5px;
  display: flex;
  justify-content: flex-end;
  overflow: hidden;
}

mark {
  height: 17px;
  line-height: 16px;
  background-color: #0078d7;
  color: #fff;
  letter-spacing: -0.11px;
  white-space: nowrap;
}

.browse {
  width: 23px;
  height: 21px;
  margin-left: 1px;
  border: 1px solid #adadad;
  background-color: #e1e1e1;
  display: flex;
  align-items: center;
  justify-content: center;
}

.browse svg {
  width: 15px;
  height: 13px;
}

.scale .input {
  width: 120px;
}

.import hr {
  height: 1px;
  margin: 15px -4px 12px -5px;
  border: 0;
  background-color: #a0a0a0;
}

.place {
  margin-bottom: 2px;
}

.place .check {
  width: 66px;
}

.place label {
  width: 15px;
}

.place .y {
  width: 15px;
  margin-left: 18px;
}

.place .input {
  width: 110px;
}

.input.off {
  border-color: #ccc;
  background-color: #f0f0f0;
}

.off {
  color: #8c8c8c;
}

.place > span.off {
  padding-left: 5px;
}

.layer-pick {
  height: 22px;
  margin-bottom: 3px;
}

.layer-pick .check {
  width: 81px;
}

.combo.white {
  width: 253px;
  height: 22px;
  padding: 0 3px 0 6px;
  border-color: #7a7a7a;
  background-color: #fff;
}

.combo b {
  width: 14px;
  height: 14px;
  margin-right: 5px;
  border: 1px solid #000;
  background-color: #c2c2c2;
}

.group {
  height: 22px;
  margin-bottom: 0;
}

.group + hr {
  margin: 11px -4px 11px -5px;
}

.fix {
  margin-bottom: 14px;
}

.fix .check {
  width: 116px;
}

.fix label {
  width: 56px;
}

.fix .input {
  width: 94px;
}

.field.fix > span:last-child {
  padding-left: 5px;
}

.buttons {
  display: flex;
  justify-content: flex-end;
  gap: 10px;
}

.button {
  width: 73px;
  height: 21px;
  line-height: 19px;
  text-align: center;
  border: 1px solid #adadad;
  background-color: #e1e1e1;
  letter-spacing: 0.5px;
}

.button.default {
  border: 2px solid #0078d7;
  line-height: 18px;
  letter-spacing: -0.3px;
}

.corner {
  position: absolute;
  right: 2px;
  bottom: 2px;
  width: 9px;
  height: 9px;
}

.warning {
  left: 883px;
  top: 65px;
  width: 506px;
  height: 309px;
}

.warning .dialog-title {
  height: 31px;
  padding: 0 12px 1px 11px;
  border-top: 1px solid #222;
}

.warning .dialog-body {
  height: 262px;
  padding: 10px 11px 0 11px;
  border-left: 2px solid #222;
  border-right: 2px solid #888;
  border-bottom: 1px solid #333;
}

.report {
  height: 213px;
  margin-bottom: 11px;
  padding: 12px 10px;
  background-color: #fff;
  font: 13px/13px "Liberation Sans", Arial, sans-serif;
  letter-spacing: 0.45px;
}

.report strong {
  display: block;
  line-height: 14px;
  letter-spacing: 0.23px;
}

.report .note {
  width: 334px;
  height: 40px;
  margin: 4px 0 0 55px;
}

.report .note text {
  font-size: 28px;
}

.marks {
  position: absolute;
  left: 0;
  top: 0;
  width: 1406px;
  height: 856px;
  fill: none;
  stroke-linecap: round;
  stroke-linejoin: round;
  pointer-events: none;
}

.orange {
  stroke: #ff7f27;
  stroke-width: 8px;
}

.red {
  stroke: #ed1c24;
  stroke-width: 4px;
}
```
